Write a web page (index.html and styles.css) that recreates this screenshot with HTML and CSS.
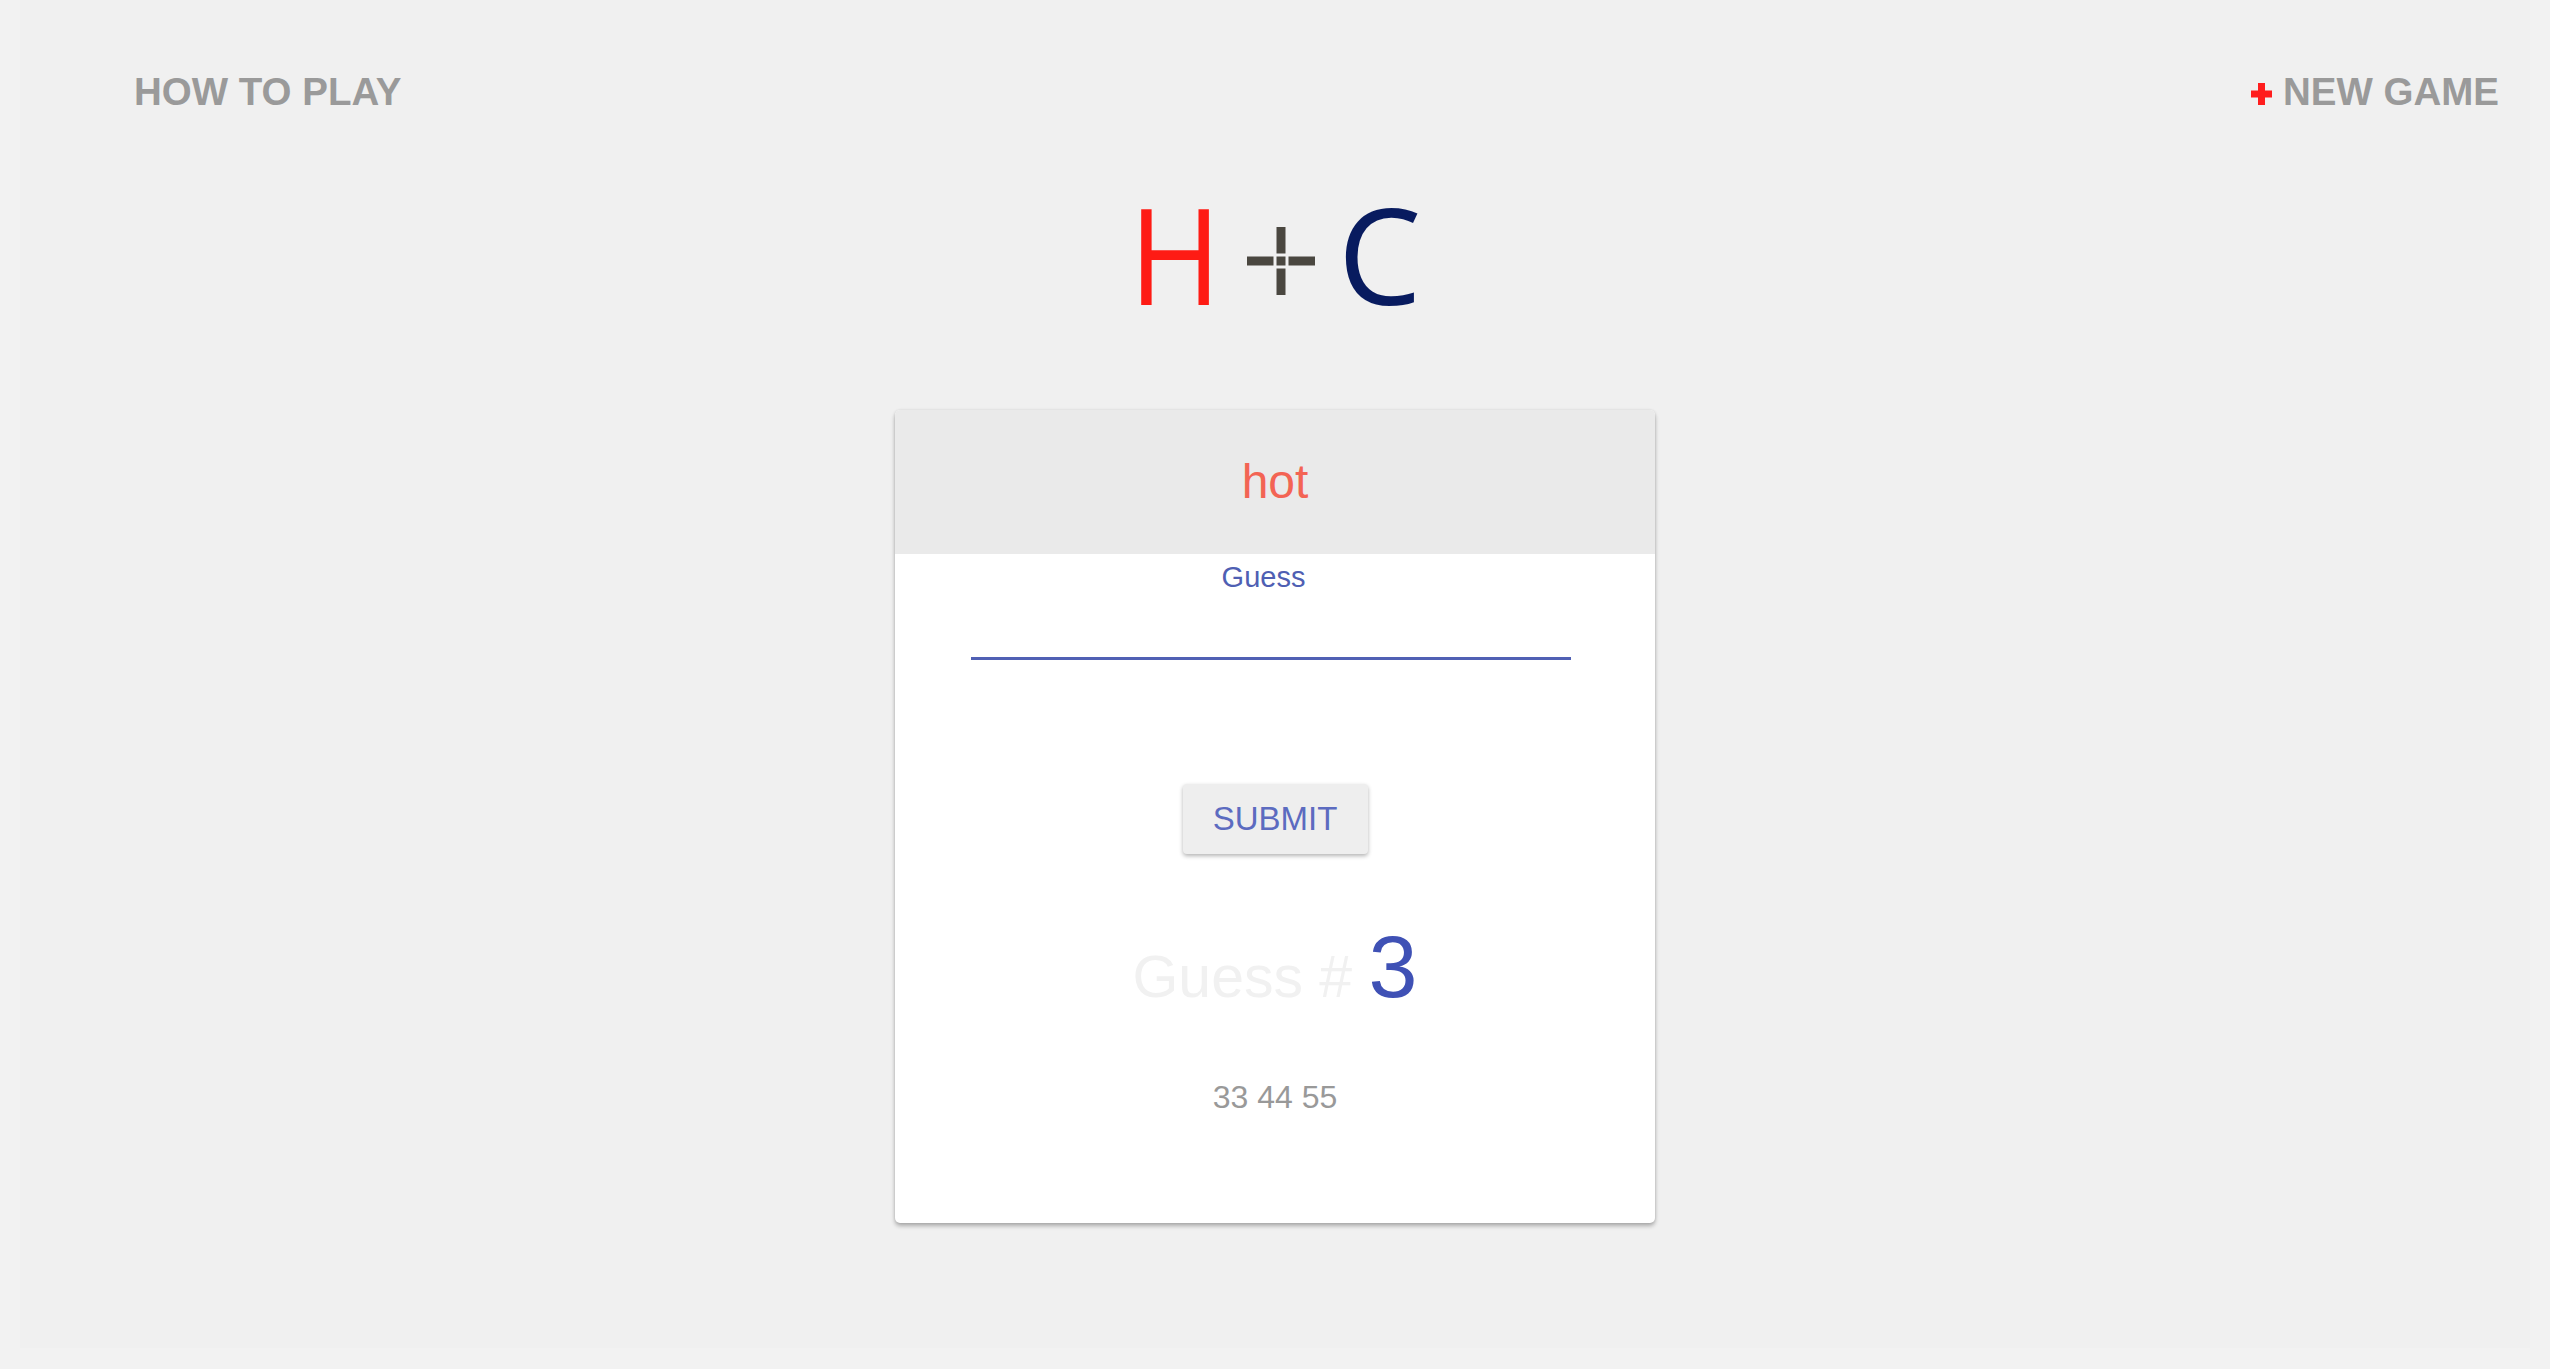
FILE: index.html
```html
<!DOCTYPE html>
<html lang="en">
<head>
  <meta charset="UTF-8">
  <meta name="viewport" content="width=device-width, initial-scale=1.0">
  <title>Hot or Cold</title>
  <link rel="stylesheet" href="styles.css">
</head>
<body>
  <div class="page">
    <nav class="nav">
      <a class="nav-link" href="#">HOW TO PLAY</a>
      <a class="nav-link" href="#">
        <svg class="nav-plus" width="21" height="22" viewBox="0 0 21 22">
          <rect x="7" y="0" width="7" height="22" fill="#ff1d1d"/>
          <rect x="0" y="7.5" width="21" height="7" fill="#ff1d1d"/>
        </svg>NEW GAME</a>
    </nav>

    <!-- logo -->
    <h1 class="logo">
      <span class="logo-h">H</span>
      <svg class="logo-plus" width="68" height="68" viewBox="0 0 68 68">
        <rect x="29.5" y="0" width="9" height="26.5" fill="#4a4740"/>
        <rect x="29.5" y="41.5" width="9" height="26.5" fill="#4a4740"/>
        <rect x="0" y="29.5" width="26.5" height="9" fill="#4a4740"/>
        <rect x="41.5" y="29.5" width="26.5" height="9" fill="#4a4740"/>
        <rect x="29.5" y="29.5" width="9" height="9" fill="#4a4740"/>
      </svg>
      <span class="logo-c">C</span>
    </h1>

    <div class="card">
      <div class="card-header">
        <span class="feedback">hot</span>
      </div>
      <div class="card-body">
        <label class="guess-label" for="guess">Guess</label>
        <div class="field">
          <input type="text" id="guess" class="guess-input">
        </div>
        <button class="submit">SUBMIT</button>
        <p class="count">Guess # <span class="count-num">3</span></p>
        <p class="history">33 44 55</p>
      </div>
    </div>
  </div>
</body>
</html>
```

FILE: styles.css
```css
body {
  margin: 0;
  background-color: #f2f2f2;
  font-family: "Liberation Sans", Arial, sans-serif;
}

.page {
  margin: 0 20px;
  height: 1348px;
  background-color: #f0f0f0;
  overflow: hidden;
}

.nav {
  display: flex;
  justify-content: space-between;
  padding: 73px 31px 0 114px;
}

.nav-link {
  font-size: 38.5px;
  line-height: 1;
  font-weight: bold;
  color: #9a9a9a;
  text-decoration: none;
}

.nav-plus {
  vertical-align: baseline;
  margin-right: 11px;
}

.logo {
  display: flex;
  justify-content: center;
  align-items: flex-start;
  margin: 75px 0 0;
  font-family: "Open Sans", sans-serif;
  font-weight: normal;
  font-size: 133px;
  line-height: 1;
}

.logo-h {
  color: #fe1b14;
  display: inline-block;
  transform: scaleX(0.94);
  transform-origin: left center;
}

.logo-plus {
  margin: 40px 23px 0 20px;
}

.logo-c {
  color: #081b5f;
}

.card {
  width: 760px;
  margin: 90px auto 0;
  background: #ffffff;
  border-radius: 5px;
  overflow: hidden;
  box-shadow: 0 3px 4px rgba(0, 0, 0, 0.28), 0 0 3px rgba(0, 0, 0, 0.1);
}

.card-header {
  height: 144px;
  background-color: #eaeaea;
  display: flex;
  justify-content: center;
  align-items: center;
}

.feedback {
  font-size: 48px;
  line-height: 1;
  color: #f36454;
}

.card-body {
  display: flex;
  flex-direction: column;
  align-items: center;
  padding: 9px 0 110px;
}

.guess-label {
  font-size: 29px;
  line-height: 1;
  color: #4f5fb3;
  padding-right: 23px;
}

.field {
  align-self: flex-start;
  margin: 61px 0 0 76px;
  width: 600px;
}

.guess-input {
  display: block;
  width: 100%;
  height: 4px;
  padding: 0;
  border: none;
  border-bottom: 3px solid #5060b4;
  background: transparent;
  outline: none;
}

.submit {
  margin-top: 124px;
  width: 185px;
  height: 70px;
  padding: 0;
  border: none;
  border-radius: 4px;
  background-color: #eeeeee;
  box-shadow: 0 2px 4px rgba(0, 0, 0, 0.3);
  font-family: "Liberation Sans", Arial, sans-serif;
  font-size: 33px;
  line-height: 68px;
  color: #5c6bc0;
  cursor: pointer;
}

.count {
  margin: 69px 0 0;
  font-size: 59px;
  line-height: 1;
  color: #f1f1f1;
}

.count-num {
  font-size: 88px;
  color: #3f51b5;
}

.history {
  margin: 70px 0 0;
  font-size: 32px;
  line-height: 1;
  color: #999999;
}
```
